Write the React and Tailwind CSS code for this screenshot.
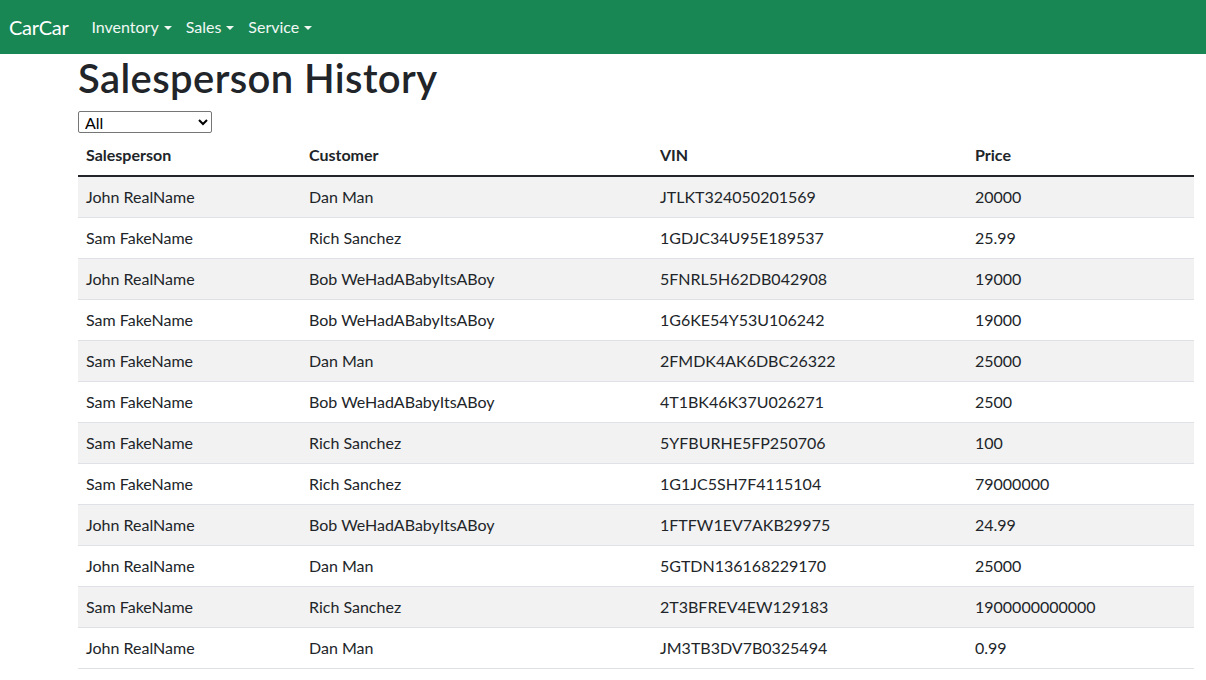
const sales = [
  ['John RealName', 'Dan Man', 'JTLKT324050201569', '20000'],
  ['Sam FakeName', 'Rich Sanchez', '1GDJC34U95E189537', '25.99'],
  ['John RealName', 'Bob WeHadABabyItsABoy', '5FNRL5H62DB042908', '19000'],
  ['Sam FakeName', 'Bob WeHadABabyItsABoy', '1G6KE54Y53U106242', '19000'],
  ['Sam FakeName', 'Dan Man', '2FMDK4AK6DBC26322', '25000'],
  ['Sam FakeName', 'Bob WeHadABabyItsABoy', '4T1BK46K37U026271', '2500'],
  ['Sam FakeName', 'Rich Sanchez', '5YFBURHE5FP250706', '100'],
  ['Sam FakeName', 'Rich Sanchez', '1G1JC5SH7F4115104', '79000000'],
  ['John RealName', 'Bob WeHadABabyItsABoy', '1FTFW1EV7AKB29975', '24.99'],
  ['John RealName', 'Dan Man', '5GTDN136168229170', '25000'],
  ['Sam FakeName', 'Rich Sanchez', '2T3BFREV4EW129183', '1900000000000'],
  ['John RealName', 'Dan Man', 'JM3TB3DV7B0325494', '0.99'],
];

function NavItem({ label }) {
  return (
    <span className="flex items-center gap-[5px] px-[7px] text-[16px] text-[#f1f8f4]">
      {label}
      <span className="mt-[1px] border-x-[4px] border-t-[4px] border-x-transparent border-t-[#f1f8f4]" />
    </span>
  );
}

export default function App() {
  return (
    <div className="min-h-[680px] bg-white font-['Lato','Liberation_Sans',sans-serif] text-[#212529]">
      {/* Navbar */}
      <nav className="flex h-[54px] items-center bg-[#198754] pl-[9px]">
        <span className="mr-[16px] text-[20px] tracking-[-0.3px] text-white">CarCar</span>
        <NavItem label="Inventory" />
        <NavItem label="Sales" />
        <NavItem label="Service" />
      </nav>

      <div className="ml-[78px] w-[1116px]">
        <h1 className="mb-[8px] text-[40px] font-semibold leading-[49px] tracking-[0.4px]">
          Salesperson History
        </h1>
        <div className="h-[24px]">
          <select className="h-[22px] w-[134px] rounded-[2px] border border-[#767676] bg-white px-[2px] text-[16px] leading-[20px] text-black">
            <option>All</option>
            <option>John RealName</option>
            <option>Sam FakeName</option>
          </select>
        </div>

        <table className="w-full border-collapse text-[16px]">
          <thead>
            <tr className="border-b-2 border-[#212529] text-left">
              <th className="w-[223px] px-[8px] py-[8px] font-bold leading-[24px]">Salesperson</th>
              <th className="w-[351px] px-[8px] py-[8px] font-bold leading-[24px]">Customer</th>
              <th className="w-[315px] px-[8px] py-[8px] font-bold leading-[24px]">VIN</th>
              <th className="px-[8px] py-[8px] font-bold leading-[24px]">Price</th>
            </tr>
          </thead>
          <tbody>
            {sales.map((row, i) => (
              <tr
                key={row[2]}
                className={`border-b border-[#dee2e6] ${i % 2 === 0 ? 'bg-[#f2f2f2]' : 'bg-white'}`}
              >
                {row.map((cell, j) => (
                  <td key={j} className="px-[8px] py-[8px] leading-[24px]">
                    {cell}
                  </td>
                ))}
              </tr>
            ))}
          </tbody>
        </table>
      </div>
    </div>
  );
}
